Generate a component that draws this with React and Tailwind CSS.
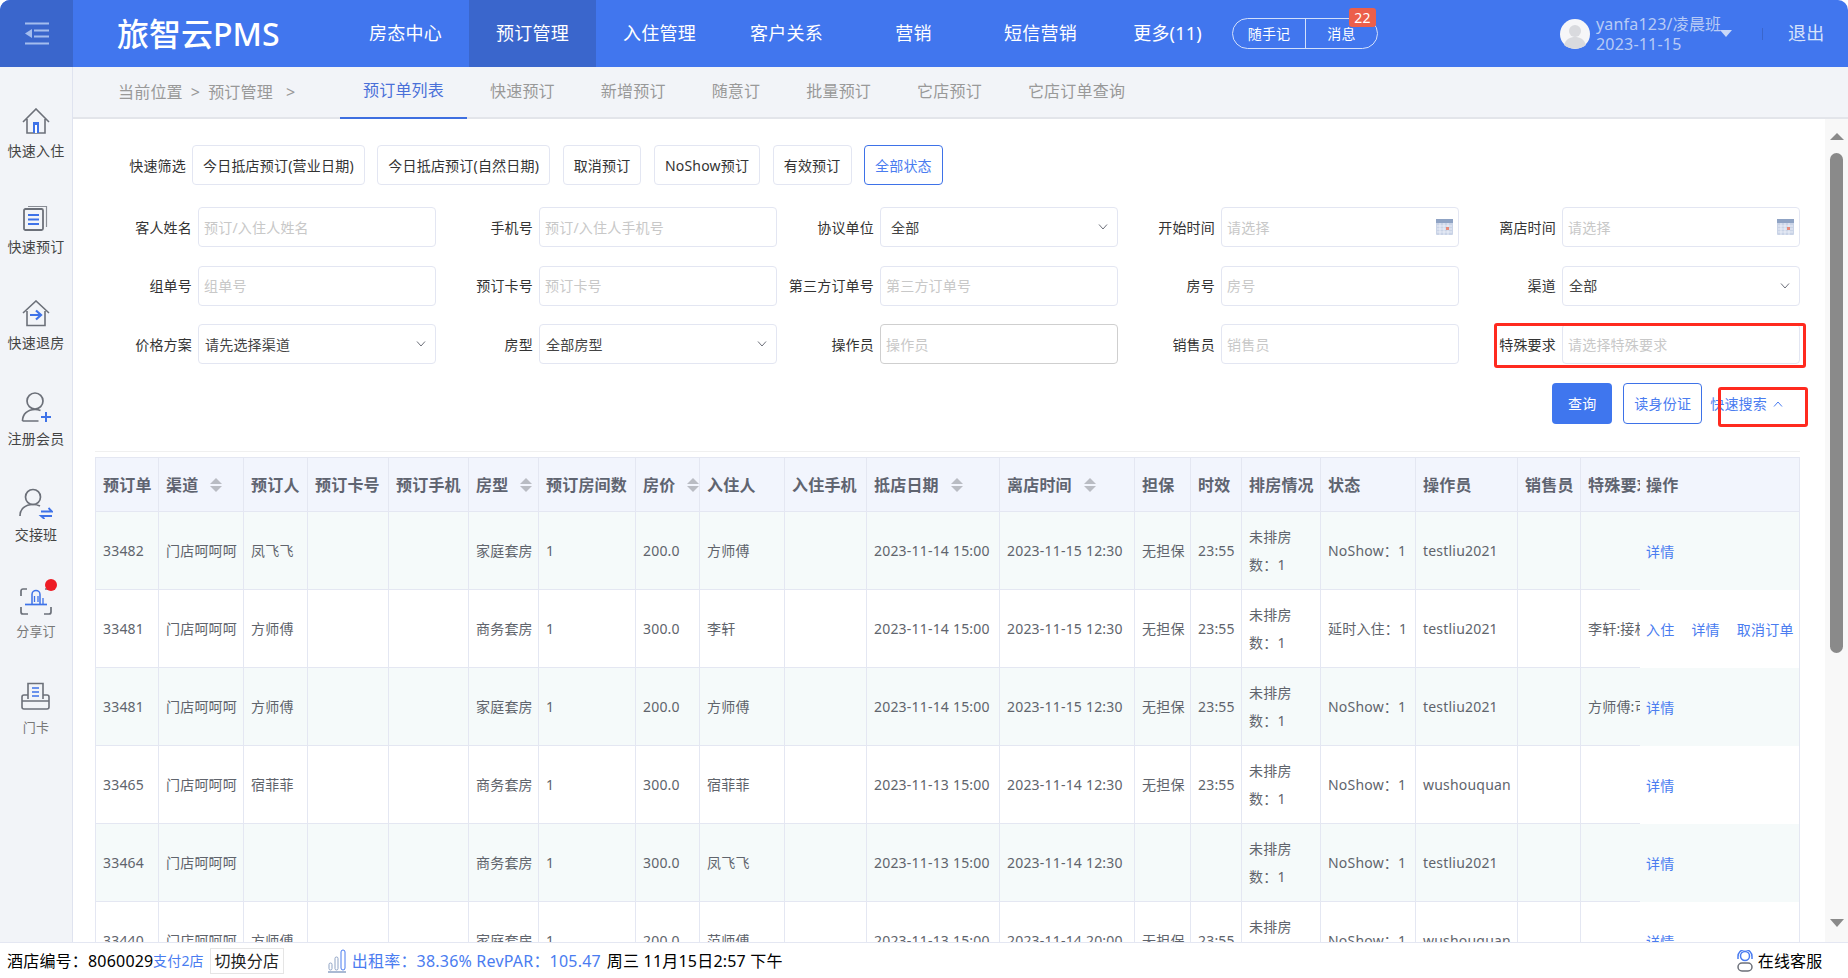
import { Fragment } from 'react';

const FONT = 'font-["Noto_Sans","Noto_Sans_CJK_SC",sans-serif]';

const NAV = ['房态中心', '预订管理', '入住管理', '客户关系', '营销', '短信营销', '更多(11)'];
const TABS = ['预订单列表', '快速预订', '新增预订', '随意订', '批量预订', '它店预订', '它店订单查询'];
const QUICK = ['今日抵店预订(营业日期)', '今日抵店预订(自然日期)', '取消预订', 'NoShow预订', '有效预订'];

const FIELDS = [
    { label: '客人姓名', hint: '预订/入住人姓名' },
    { label: '手机号', hint: '预订/入住人手机号' },
    { label: '协议单位', value: '全部', wide: true },
    { label: '开始时间', hint: '请选择', date: true },
    { label: '离店时间', hint: '请选择', date: true },
    { label: '组单号', hint: '组单号' },
    { label: '预订卡号', hint: '预订卡号' },
    { label: '第三方订单号', hint: '第三方订单号' },
    { label: '房号', hint: '房号' },
    { label: '渠道', value: '全部' },
    { label: '价格方案', value: '请先选择渠道' },
    { label: '房型', value: '全部房型' },
    { label: '操作员', hint: '操作员', dark: true },
    { label: '销售员', hint: '销售员' },
    { label: '特殊要求', hint: '请选择特殊要求' },
];

const COLS = [
    { name: '预订单', width: 'w-[64px]' },
    { name: '渠道', width: 'w-[85px]', sort: true },
    { name: '预订人', width: 'w-[64px]' },
    { name: '预订卡号', width: 'w-[81px]' },
    { name: '预订手机', width: 'w-[80px]' },
    { name: '房型', width: 'w-[70px]', sort: true },
    { name: '预订房间数', width: 'w-[97px]' },
    { name: '房价', width: 'w-[64px]', sort: true },
    { name: '入住人', width: 'w-[85px]' },
    { name: '入住手机', width: 'w-[82px]' },
    { name: '抵店日期', width: 'w-[133px]', sort: true },
    { name: '离店时间', width: 'w-[135px]', sort: true },
    { name: '担保', width: 'w-[56px]' },
    { name: '时效', width: 'w-[51px]' },
    { name: '排房情况', width: 'w-[79px]' },
    { name: '状态', width: 'w-[95px]' },
    { name: '操作员', width: 'w-[102px]' },
    { name: '销售员', width: 'w-[63px]' },
    { name: '特殊要求', width: 'w-[59px]', noLine: true },
    { name: '操作', width: 'w-[160px]', op: true },
];

const ROWS = [
    ['33482', '门店呵呵呵', '凤飞飞', '', '', '家庭套房', '1', '200.0', '方师傅', '', '2023-11-14 15:00', '2023-11-15 12:30', '无担保', '23:55', '未排房数：1', 'NoShow：1', 'testliu2021', '', ''],
    ['33481', '门店呵呵呵', '方师傅', '', '', '商务套房', '1', '300.0', '李轩', '', '2023-11-14 15:00', '2023-11-15 12:30', '无担保', '23:55', '未排房数：1', '延时入住：1', 'testliu2021', '', '李轩:接机'],
    ['33481', '门店呵呵呵', '方师傅', '', '', '家庭套房', '1', '200.0', '方师傅', '', '2023-11-14 15:00', '2023-11-15 12:30', '无担保', '23:55', '未排房数：1', 'NoShow：1', 'testliu2021', '', '方师傅:可'],
    ['33465', '门店呵呵呵', '宿菲菲', '', '', '商务套房', '1', '300.0', '宿菲菲', '', '2023-11-13 15:00', '2023-11-14 12:30', '无担保', '23:55', '未排房数：1', 'NoShow：1', 'wushouquan', '', ''],
    ['33464', '门店呵呵呵', '', '', '', '商务套房', '1', '300.0', '凤飞飞', '', '2023-11-13 15:00', '2023-11-14 12:30', '', '', '未排房数：1', 'NoShow：1', 'testliu2021', '', ''],
    ['33440', '门店呵呵呵', '方师傅', '', '', '家庭套房', '1', '200.0', '范师傅', '', '2023-11-13 15:00', '2023-11-14 20:00', '无担保', '23:55', '未排房数：1', 'NoShow：1', 'wushouquan', '', ''],
];

function IconHouse() {
    return (
        <svg width="28" height="27" viewBox="0 0 28 27" fill="none">
            <path d="M1 14 14 1l13 13M5 11v14h18V11" stroke="#6c7079" strokeWidth="1.6" />
            <path d="M11 14h6v11h-6z" fill="#3e72e8" />
            <path d="M13 17h2v8h-2z" fill="#fff" />
        </svg>
    );
}

function IconOrder() {
    return (
        <svg width="26" height="26" viewBox="0 0 26 26" fill="none">
            <path d="M5 1.5h18.5V22" stroke="#8a8e96" strokeWidth="1.2" />
            <rect x="1" y="4" width="19" height="21" rx="1.5" stroke="#6c7079" strokeWidth="1.8" />
            <path d="M5 10h11M5 14.5h11M5 19h11" stroke="#3e72e8" strokeWidth="2" />
        </svg>
    );
}

function IconCheckout() {
    return (
        <svg width="28" height="27" viewBox="0 0 28 27" fill="none">
            <path d="M1 13 14 1l13 12M5 11v14.5h18V11" stroke="#6c7079" strokeWidth="1.6" />
            <path d="M8 15h10M14 10.500l5 4.500-5 4.500" stroke="#3e72e8" strokeWidth="2.2" />
        </svg>
    );
}

function IconMember() {
    return (
        <svg width="30" height="31" viewBox="0 0 30 31" fill="none">
            <circle cx="14" cy="9" r="8" stroke="#6c7079" strokeWidth="1.7" />
            <path d="M1.500 29c0-7 5-11.500 12.500-11.500 2 0 4 .4 5.500 1.100M1.500 29h16" stroke="#6c7079" strokeWidth="1.7" />
            <path d="M25 20v10M20 25h10" stroke="#3e72e8" strokeWidth="2" />
        </svg>
    );
}

function IconShift() {
    return (
        <svg width="34" height="31" viewBox="0 0 34 31" fill="none">
            <circle cx="14" cy="9" r="7.500" stroke="#6c7079" strokeWidth="1.7" />
            <path d="M1 28c0-7 5-11.500 13-11.500 2.500 0 5 .5 7 1.500" stroke="#6c7079" strokeWidth="1.7" />
            <path d="M22 23.500h11l-3.500-3.500M33 28H22l3.500 3" stroke="#3e72e8" strokeWidth="1.8" />
        </svg>
    );
}

function IconShare() {
    return (
        <svg width="32" height="27" viewBox="0 0 32 27" fill="none">
            <path d="M7 1H3a2 2 0 0 0-2 2v5M25 1h4M1 19v5a2 2 0 0 0 2 2h5M31 19v5a2 2 0 0 1-2 2h-5" stroke="#6c7079" strokeWidth="1.700" />
            <path d="M12 16V6.500C12 4 14 2.500 16 2.500s4 1.500 4 4V16" stroke="#3e72e8" strokeWidth="1.500" />
            <path d="M5 16.500h22" stroke="#3e72e8" strokeWidth="1.700" />
            <path d="M14.500 8v6M18 8v6M23 10v6" stroke="#3e72e8" strokeWidth="1.300" />
        </svg>
    );
}

function IconCard() {
    return (
        <svg width="30" height="29" viewBox="0 0 30 29" fill="none">
            <path d="M7 17V1.500h15V17" stroke="#6c7079" strokeWidth="1.600" />
            <path d="M11 6h7M11 10h7M11 14h7" stroke="#3e72e8" strokeWidth="1.700" />
            <path d="M7 13H3a2 2 0 0 0-2 2v10a2 2 0 0 0 2 2h23a2 2 0 0 0 2-2V15a2 2 0 0 0-2-2h-4M1 19h27" stroke="#6c7079" strokeWidth="1.600" />
        </svg>
    );
}

const SIDE = [
    { label: '快速入住', icon: <IconHouse /> },
    { label: '快速预订', icon: <IconOrder /> },
    { label: '快速退房', icon: <IconCheckout /> },
    { label: '注册会员', icon: <IconMember /> },
    { label: '交接班', icon: <IconShift /> },
    { label: '分享订', icon: <IconShare />, small: true, dot: true },
    { label: '门卡', icon: <IconCard />, small: true },
];

function Chevron({ up, color = '#6c7079' }) {
    return (
        <svg width="10" height="6" viewBox="0 0 10 6" fill="none" className="shrink-0">
            <path d={up ? 'M1 5.500 5 1l4 4.500' : 'M1 .5 5 5l4-4.500'} stroke={color} strokeWidth="1" />
        </svg>
    );
}

function Calendar() {
    return (
        <svg width="17" height="16" viewBox="0 0 17 16" className="shrink-0">
            <rect x="0" y="0" width="17" height="16" rx="1" fill="#c9d3e6" />
            <rect x="0" y="0" width="17" height="4" fill="#8fa3c4" />
            <path d="M1 7h15M1 10h15M1 13h15M4 4v12M8 4v12M12 4v12" stroke="#f1f4fa" strokeWidth=".8" />
            <rect x="10" y="8" width="3" height="3" fill="#e88a7a" />
        </svg>
    );
}

function SortMark() {
    return (
        <span className="ml-[12px] inline-flex shrink-0 flex-col gap-[2px]">
            <span className="h-0 w-0 border-x-[6px] border-b-[6px] border-x-transparent border-b-[#b9bcc3]" />
            <span className="h-0 w-0 border-x-[6px] border-t-[6px] border-x-transparent border-t-[#b9bcc3]" />
        </span>
    );
}

function Field({ field }) {
    const box = 'flex h-[40px] w-[238px] shrink-0 items-center rounded-[4px] border bg-white text-[14px]';
    return (
        <div className="flex items-center">
            <label className="flex-1 pr-[6px] text-right text-[14px] whitespace-nowrap text-[#333]">{field.label}</label>
            {field.value ? (
                <div className={`${box} justify-between border-[#e3e6f2] pr-[9px] text-[#444] ${field.wide ? 'pl-[10px]' : 'pl-[6px]'}`}>
                    <span>{field.value}</span>
                    <Chevron />
                </div>
            ) : (
                <div className={`${box} px-[5px] ${field.dark ? 'border-[#cfcfcf]' : 'border-[#e3e6f2]'}`}>
                    <input
                        readOnly
                        placeholder={field.hint}
                        className="w-full min-w-0 bg-transparent outline-none placeholder:text-[#c8c8c8]"
                    />
                    {field.date && <Calendar />}
                </div>
            )}
        </div>
    );
}

function Cell({ value, idx, bg }) {
    const wraps = idx === 14;
    return (
        <td className={`${bg} h-[78px] overflow-hidden border-r border-b border-[#e4e7f2] px-[7px] text-[14px] leading-[28px] text-[#60646c] ${wraps ? '' : 'whitespace-nowrap'} ${idx === 0 ? 'border-l' : ''} ${idx === 18 ? 'border-r-0 pr-0' : ''}`}>
            {value}
        </td>
    );
}

function Ops({ first, bg }) {
    return (
        <td className={`${bg} overflow-hidden border-r border-[#e4e7f2] pl-[6px] text-[14px] whitespace-nowrap text-[#4a7cf0]`}>
            {first ? (
                <div className="flex gap-[17px]">
                    <span>入住</span>
                    <span>详情</span>
                    <span>取消订单</span>
                </div>
            ) : (
                <span>详情</span>
            )}
        </td>
    );
}

export default function App() {
    return (
        <div className={`${FONT} flex h-[978px] w-[1848px] flex-col overflow-hidden rounded-[10px] bg-white tracking-[0.2px]`}>
            <header className="flex h-[67px] shrink-0 items-center bg-[#4176ee] text-white">
                <div className="flex h-full w-[73px] shrink-0 items-center justify-center bg-[#3a66cc]">
                    <svg width="26" height="23" viewBox="0 0 26 23" fill="none" stroke="#a4bdee" strokeWidth="2">
                        <path d="M1 1.500h24M10 8.500h15M10 14.500h15M1 21.500h24" />
                        <path d="M8 7v9l-7-4.500z" fill="#a4bdee" stroke="none" />
                    </svg>
                </div>
                <div className="w-[269px] shrink-0 pl-[44px] text-[32px] leading-none font-medium tracking-normal whitespace-nowrap">旅智云PMS</div>
                <nav className="flex h-full">
                    {NAV.map((item) => (
                        <div
                            key={item}
                            className={`flex h-full w-[127px] items-center justify-center text-[18px] ${item === '预订管理' ? 'bg-[#3a66cc]' : ''}`}
                        >
                            {item}
                        </div>
                    ))}
                </nav>
                <div className="relative ml-[1px] flex h-[31px] w-[146px] items-center rounded-full border border-[#d3e0fb] text-[14px]">
                    <span className="w-[73px] border-r border-[#d3e0fb] text-center leading-[29px]">随手记</span>
                    <span className="flex-1 text-center">消息</span>
                    <span className="absolute top-[-11px] right-[1px] flex h-[19px] w-[27px] items-center justify-center rounded-[3px] bg-[#ec5f4a] text-[14px] leading-none">22</span>
                </div>
                <svg width="30" height="30" viewBox="0 0 30 30" className="ml-[182px] shrink-0">
                    <circle cx="15" cy="15" r="15" fill="#f6f6f8" />
                    <circle cx="15" cy="12" r="6" fill="#d9dade" />
                    <path d="M4 26c2-6 6-8 11-8s9 2 11 8c-6 5-16 5-22 0z" fill="#d9dade" />
                </svg>
                <div className="ml-[6px] w-[124px] shrink-0 text-[16px] leading-[20px] whitespace-nowrap text-[#b8cbf6]">
                    <div>yanfa123/凌晨班</div>
                    <div>2023-11-15</div>
                </div>
                <span className="h-0 w-0 border-x-[6.500px] border-t-[7px] border-x-transparent border-t-[#c9d8f8]" />
                <span className="ml-[30px] h-[12px] w-px bg-[#3a66cc]" />
                <span className="ml-[25px] text-[18px] text-[#d6e2fb]">退出</span>
            </header>

            <div className="flex min-h-0 flex-1">
                <aside className="w-[73px] shrink-0 border-r border-[#dfe3ef] bg-[#f2f4f8] pt-[34px]">
                    {SIDE.map((item) => (
                        <div key={item.label} className="flex h-[96px] flex-col items-center">
                            <div className="relative flex h-[34px] items-end">
                                {item.icon}
                                {item.dot && <span className="absolute top-[-2px] right-[-5px] h-[12px] w-[12px] rounded-full bg-[#ee1c25]" />}
                            </div>
                            <div className={`mt-[6px] h-5 leading-5 whitespace-nowrap ${item.small ? 'text-[13px] text-[#777]' : 'text-[14px] text-[#444]'}`}>{item.label}</div>
                        </div>
                    ))}
                </aside>

                <main className="flex min-w-0 flex-1 flex-col">
                    <div className="flex h-[52px] shrink-0 items-center border-b-2 border-[#e3e5ea] bg-[#f2f4f8] text-[16px] text-[#999]">
                        <div className="flex w-[267px] shrink-0 pl-[45px] whitespace-nowrap">
                            <span>当前位置</span>
                            <span className="ml-[8px]">&gt;</span>
                            <span className="ml-[8px]">预订管理</span>
                            <span className="ml-[13px]">&gt;</span>
                        </div>
                        <div className="flex h-full">
                            {TABS.map((tab, i) => (
                                <div
                                    key={tab}
                                    className={`flex h-[52px] items-center px-[23px] pb-[4px] whitespace-nowrap ${i === 0 ? 'border-b-2 border-[#3e6fe0] text-[#4a70d8]' : ''}`}
                                >
                                    {tab}
                                </div>
                            ))}
                        </div>
                    </div>

                    <div className="flex min-h-0 flex-1">
                        <div className="relative min-w-0 flex-1 overflow-hidden pt-[26px] pl-[22px]">
                            <div className="flex h-[40px] items-center">
                                <span className="w-[97px] pr-[6px] text-right text-[14px] text-[#333]">快速筛选</span>
                                <div className="flex gap-[12.500px]">
                                    {QUICK.map((item) => (
                                        <button key={item} className="h-[40px] rounded-[4px] border border-[#e3e6f2] bg-white px-[10px] text-[14px] whitespace-nowrap text-[#333]">
                                            {item}
                                        </button>
                                    ))}
                                    <button className="h-[40px] rounded-[4px] border border-[#3e72e8] bg-white px-[10px] text-[14px] whitespace-nowrap text-[#4a7cf0]">全部状态</button>
                                </div>
                            </div>

                            <div className="mt-[22px] grid w-[1705px] grid-cols-5 gap-y-[18.500px]">
                                {FIELDS.map((field) => (
                                    <Field key={field.label} field={field} />
                                ))}
                            </div>

                            <div className="mt-[19px] flex h-[41px] w-[1705px] items-center justify-end gap-[11px] pr-[17px]">
                                <button className="h-[41px] w-[60px] rounded-[4px] bg-[#3f76ee] text-[14px] text-white">查询</button>
                                <button className="h-[41px] w-[79px] rounded-[4px] border border-[#3e72e8] text-[14px] text-[#4a7cf0]">读身份证</button>
                                <span className="-ml-[3px] flex items-center gap-[6px] text-[14px] whitespace-nowrap text-[#4a7cf0]">
                                    快速搜索
                                    <Chevron up color="#4a7cf0" />
                                </span>
                            </div>

                            <div className="mt-[27px] h-px w-[1705px] bg-[#f0f0f0]" />

                            <table className="mt-[5px] w-[1705px] table-fixed border-separate border-spacing-0">
                                <colgroup>
                                    {COLS.map((col) => (
                                        <col key={col.name} className={col.width} />
                                    ))}
                                </colgroup>
                                <thead>
                                    <tr>
                                        {COLS.map((col, i) => (
                                            <th
                                                key={col.name}
                                                className={`h-[55px] overflow-hidden border-y border-[#e4e7f2] bg-[#f2f5fd] px-[7px] text-left text-[16px] font-bold whitespace-nowrap text-[#5f6470] ${i === 0 ? 'border-l' : ''} ${col.noLine ? 'pr-0' : 'border-r'} ${col.op ? 'pl-[6px]' : ''}`}
                                            >
                                                <div className="flex items-center">
                                                    <span>{col.name}</span>
                                                    {col.sort && <SortMark />}
                                                </div>
                                            </th>
                                        ))}
                                    </tr>
                                </thead>
                                <tbody>
                                    {ROWS.map((row, r) => {
                                        const bg = r % 2 === 0 ? 'bg-[#f5fafa]' : 'bg-white';
                                        return (
                                            <tr key={`${row[0]}-${r}`}>
                                                {row.map((value, i) => (
                                                    <Fragment key={i}>
                                                        <Cell value={value} idx={i} bg={bg} />
                                                    </Fragment>
                                                ))}
                                                <Ops first={r === 1} bg={bg} />
                                            </tr>
                                        );
                                    })}
                                </tbody>
                            </table>

                            <div className="absolute top-[204px] left-[421px] hidden" />
                            <div className="pointer-events-none absolute top-[204px] left-[1421px] h-[45px] w-[312px] rounded-[3px] border-[3.500px] border-[#ff2a1f]" />
                            <div className="pointer-events-none absolute top-[268px] left-[1645px] h-[40px] w-[90px] rounded-[3px] border-[3.500px] border-[#ff2a1f]" />
                        </div>

                        <div className="flex w-[23px] shrink-0 flex-col items-center bg-[#f8f8f8] pt-[14px] pb-[15px]">
                            <span className="h-0 w-0 border-x-[7.500px] border-b-[7px] border-x-transparent border-b-[#8a8a8a]" />
                            <div className="mt-[13px] h-[500px] w-[13px] rounded-full bg-[#8a8a8a]" />
                            <span className="mt-auto h-0 w-0 border-x-[7.500px] border-t-[8px] border-x-transparent border-t-[#8a8a8a]" />
                        </div>
                    </div>
                </main>
            </div>

            <footer className="flex h-[36px] shrink-0 items-center border-t border-[#e4e7f2] bg-white pl-[7px] text-[16px] whitespace-nowrap text-black">
                <span className="w-[146px]">酒店编号：8060029</span>
                <span className="text-[14px] text-[#4a7cf0]">支付2店</span>
                <span className="ml-[6px] flex h-[26px] w-[74px] items-center justify-center border border-[#e5e5e5] text-[#222]">切换分店</span>
                <svg width="18" height="24" viewBox="0 0 18 24" fill="none" className="ml-[44px]" stroke="#8ea3c4">
                    <path d="M0 23h18" strokeWidth="1.500" />
                    <rect x="1" y="14" width="3" height="7" rx="1.500" />
                    <rect x="7" y="8" width="3" height="13" rx="1.500" />
                    <rect x="13" y="1" width="4" height="20" rx="2" stroke="#4a7cf0" />
                </svg>
                <span className="ml-[6px] w-[255px] text-[#4a7cf0]">出租率：38.36% RevPAR：105.47</span>
                <span>周三 11月15日2:57 下午</span>
                <svg width="18" height="22" viewBox="0 0 18 22" fill="none" className="ml-[953px]">
                    <circle cx="9" cy="6" r="4.500" stroke="#4a7cf0" strokeWidth="1.500" />
                    <path d="M2 9V6.500a7 7 0 0 1 14 0V9" stroke="#4a7cf0" strokeWidth="1.500" />
                    <rect x="2" y="13" width="14" height="8" rx="4" stroke="#6c7079" strokeWidth="1.500" />
                </svg>
                <span className="ml-[4px]">在线客服</span>
            </footer>
        </div>
    );
}
